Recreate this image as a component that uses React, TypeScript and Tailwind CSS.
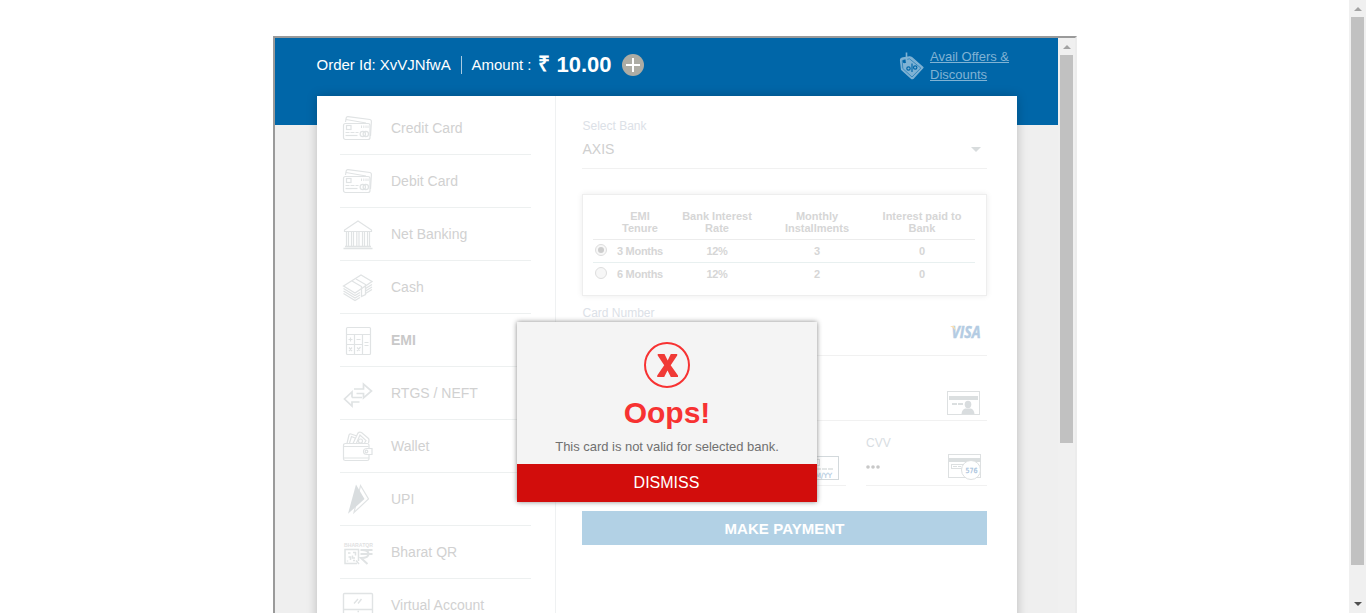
import React from "react";

const lineIcon = "shrink-0 fill-none stroke-[#e0e3e4]";

function CardsIcon() {
  return (
    <svg width="32" height="32" viewBox="0 0 32 32" className={lineIcon} strokeWidth="1.2">
      <path d="M3.5 10 L4.2 6 Q4.600 4.500 6 4.700 L28 7.500 Q29.600 7.900 29.400 9.500 L28.500 24" />
      <path d="M4 7.500 L24 11" />
      <rect x="1.500" y="11.500" width="26.500" height="16" rx="2" />
      <rect x="4.500" y="13.500" width="4.500" height="4" />
      <path d="M19.500 13.500 v2.500 M21.800 13.500 v2.500 M24 13.500 v2.500 M26 13.500 v2.500" strokeWidth="1" />
      <path d="M3.500 20.500 h13" strokeDasharray="4 1" />
      <path d="M3.500 23.500 h12" />
      <circle cx="20.800" cy="22" r="2.700" />
      <circle cx="23.800" cy="22" r="2.700" />
    </svg>
  );
}

function BankIcon() {
  return (
    <svg width="32" height="32" viewBox="0 0 32 32" className={lineIcon} strokeWidth="1.2">
      <path d="M16 3 L29.500 12 V13.500 H2.500 V12 Z" />
      <path d="M4.500 14 v14 M6.500 14 v14 M9.500 14 v14 M11.500 14 v14 M14.800 14 v14 M17 14 v14 M20.500 14 v14 M22.500 14 v14 M25.500 14 v14 M27.500 14 v14" />
      <path d="M3 28.500 h26 M1.500 30.500 h29" strokeWidth="1.300" />
    </svg>
  );
}

function CashIcon() {
  return (
    <svg width="32" height="32" viewBox="0 0 32 32" className={lineIcon} strokeWidth="1.300">
      <path d="M1.500 15 L19 4 L30 10.500 L13 22 Z" />
      <path d="M1.500 17.500 L13 24.500 L18 21.500 M1.500 20 L13 27 L18 24 M1.500 22.500 L13 29.500 L18 26.500" />
      <path d="M23.500 17.500 L30 13.500 M23.500 20 L30 16 M23.500 22.500 L30 18.500" />
      <path d="M10 10 L19.500 15.500 V25.500 L23.500 23.500 V13.500 L14 8" />
    </svg>
  );
}

function CalculatorIcon() {
  return (
    <svg width="32" height="32" viewBox="0 0 32 32" className={lineIcon} strokeWidth="1.200">
      <rect x="4.500" y="3.500" width="24" height="27" rx="1" />
      <path d="M4.500 10.500 H28.500 M12.500 10.500 V30 M20.500 10.500 V30 M4.500 20.500 H20.500" />
      <path d="M6.500 15.500 h4 M8.500 13.500 v4 M14.500 15.500 h4 M22.500 18.500 h4 M22.500 21.500 h4 M7 23.500 l3 3.500 M10 23.500 l-3 3.500 M15 27 l3.500 -4 M15 23.500 l3 3" />
    </svg>
  );
}

function TransferIcon() {
  return (
    <svg width="32" height="32" viewBox="0 0 32 32" className={lineIcon} strokeWidth="1.700">
      <path d="M12 12 H21.500 V7 L29.500 14 L21.500 21 V16.500 H14.500" />
      <path d="M20 20.500 H10 M10 20.500 V15 L2.500 22 L10 29 V25 H17.500" />
    </svg>
  );
}

function WalletIcon() {
  return (
    <svg width="32" height="32" viewBox="0 0 32 32" className={lineIcon} strokeWidth="1.200">
      <path d="M27 18.500 V15.500 Q27 13.500 25 13.500 H3.500 Q1.500 13.500 1.500 15.500 V29 Q1.500 30.500 3.500 30.500 H25 Q27 30.500 27 29 V24.500" />
      <path d="M30 18.500 H25 Q21.500 18.500 21.500 21.500 Q21.500 24.500 25 24.500 H30 Z M2 16.500 H26.500 M2 28 H27" />
      <circle cx="24.500" cy="21.500" r="1.300" />
      <path d="M5 13.500 L7 5 Q7.500 3.500 9 4 L15 6 M7.500 13 L9.500 6.500 L13 8 M11 13.500 L15 5 Q16.500 1 19.500 2.500 L26.500 8.500 Q27.500 9.500 26.500 13 M14.500 13 L18 5 L24 10.500 L22.500 13" />
      <circle cx="18.500" cy="11" r="2" />
    </svg>
  );
}

function UpiIcon() {
  return (
    <svg width="32" height="32" viewBox="0 0 32 32" className="shrink-0">
      <path d="M18.500 2.500 L26.500 16 L12 29.500 Z" fill="#fff" stroke="#e0e3e4" strokeWidth="1.200" />
      <path d="M14 1.500 L22.500 16 L6 30.800 Z" fill="#d9dddf" />
    </svg>
  );
}

function BharatQrIcon() {
  return (
    <svg width="32" height="32" viewBox="0 0 32 32" className={lineIcon} strokeWidth="1.500">
      <text x="2" y="10.500" textLength="29" lengthAdjust="spacingAndGlyphs" stroke="none" fill="#dfe1e2" className="font-['Liberation_Sans'] text-[5px] font-bold">BHARATQR</text>
      <path d="M15 27.500 H3 V13.500 H16.500 V25" />
      <path d="M6 17 h2.500 M11 16.500 h2.500 v3 M6.500 21 h2 v3 M10.500 19.500 v2.500 h2.500 M11 24.500 h2 M5.500 24.500 v1 M14 24.500 l3 3.500" />
      <path d="M18.500 14 H30.500 M18.500 18 H30.500 M20 14 Q26.500 14 26.500 18 Q26.500 22 19 22 L25.500 28" strokeWidth="2" />
    </svg>
  );
}

function MonitorIcon() {
  return (
    <svg width="32" height="32" viewBox="0 0 32 32" className={lineIcon} strokeWidth="1.400">
      <rect x="1.500" y="4.500" width="29" height="22" rx="1" />
      <path d="M2 20.500 h28 M12 14.500 l4 -4.500 M16 14.500 l3.500 -4.500 M15.500 22.500 h1.500" />
    </svg>
  );
}

const methods = [
  { label: "Credit Card", icon: CardsIcon },
  { label: "Debit Card", icon: CardsIcon },
  { label: "Net Banking", icon: BankIcon },
  { label: "Cash", icon: CashIcon },
  { label: "EMI", icon: CalculatorIcon, active: true },
  { label: "RTGS / NEFT", icon: TransferIcon },
  { label: "Wallet", icon: WalletIcon },
  { label: "UPI", icon: UpiIcon },
  { label: "Bharat QR", icon: BharatQrIcon },
  { label: "Virtual Account", icon: MonitorIcon },
];

const plans = [
  { tenure: "3 Months", rate: "12%", installments: "3", interest: "0", checked: true },
  { tenure: "6 Months", rate: "12%", installments: "2", interest: "0", checked: false },
];

const planGrid = "grid grid-cols-[16px_62px_92px_108px_102px] text-center text-[11px] leading-[12px] font-bold text-[#d6d6d6]";

function Header() {
  return (
    <header className="flex h-[87px] bg-[#0066a8] pl-[41.500px] text-white">
      <div className="flex h-[54px] items-center text-[15px]">
        <span className="w-[144.500px] whitespace-nowrap">Order Id: XvVJNfwA</span>
        <span className="mr-[9.500px] h-[18px] w-px bg-[#a9cbe2]" />
        <span className="w-[66px] whitespace-nowrap">Amount :</span>
        <span className="w-[19px] -translate-y-px text-[21px] font-bold">₹</span>
        <span className="w-[65.500px] -translate-y-px text-[22px] font-bold">10.00</span>
        <svg width="22" height="22" viewBox="0 0 22 22">
          <circle cx="11" cy="11" r="11" fill="#adaca4" />
          <path d="M4 11 H18 M11 4 V18" stroke="#fff" strokeWidth="2" />
        </svg>
      </div>
      <div className="mt-[10px] ml-[255px] flex">
        <svg width="26" height="32" viewBox="0 0 26 32" className="mt-[2px] mr-[5px]">
          <path d="M1.500 10 Q1.500 8.500 3 8 L10 6.800 Q11.500 6.500 12.700 7.500 L24 17.500 L14 28.500 Q13 29 12 28 L2.500 19.500 Z" fill="#7fb2d4" stroke="#7fb2d4" strokeWidth="1.200" strokeLinejoin="round" />
          <path d="M3.200 10.500 L10.500 8.800 L21.800 18 L13 27 L3.800 18.500 Z" fill="none" stroke="#1a76b1" strokeWidth=".7" />
          <circle cx="5.500" cy="11.500" r="1.800" fill="#0066a8" />
          <path d="M7.500 2.500 V12" stroke="#7fb2d4" strokeWidth="1.600" />
          <g fill="none" stroke="#0066a8" strokeWidth="1.200">
            <circle cx="9.500" cy="18.500" r="1.700" />
            <circle cx="16.200" cy="17.500" r="1.700" />
            <path d="M13 13.500 V22" />
          </g>
        </svg>
        <a className="w-[90px] text-[13px] leading-[18px] text-[#80b3d4] underline">
          Avail Offers &amp; Discounts
        </a>
      </div>
    </header>
  );
}

function Sidebar() {
  return (
    <nav className="w-[239px] shrink-0 border-r border-[#eff1f2] pt-[6px] pl-[23px]">
      {methods.map(({ label, icon: Icon, active }) => (
        <div key={label} className="flex h-[53px] w-[191px] items-center border-b border-[#edf0f0] pl-[2px]">
          <Icon />
          <span className={active ? "ml-[17px] text-[14px] font-bold text-[#c9c9c9]" : "ml-[17px] text-[14px] text-[#d1d1d1]"}>
            {label}
          </span>
        </div>
      ))}
    </nav>
  );
}

function Radio({ checked }: { checked: boolean }) {
  return (
    <span className="ml-[2px] flex size-[12px] -translate-y-px items-center justify-center rounded-full border border-[#dedede] bg-[#f7f7f7]">
      {checked && <span className="size-[6px] rounded-full bg-[#cdcdcd]" />}
    </span>
  );
}

function PlanTable() {
  return (
    <div className="mt-[25px] h-[102px] w-[405px] border border-[#eeeeee] px-[10px] pt-[15px] shadow-[0_0_6px_#ececec]">
      <div className={`${planGrid} h-[30px] w-[382px] border-b border-[#ececec]`}>
        <span />
        <span>EMI<br />Tenure</span>
        <span>Bank Interest<br />Rate</span>
        <span>Monthly<br />Installments</span>
        <span>Interest paid to<br />Bank</span>
      </div>
      {plans.map((p) => (
        <div key={p.tenure} className={`${planGrid} h-[23px] w-[382px] items-center border-b border-[#e8f0f0] tracking-[-0.3px] last:border-transparent`}>
          <Radio checked={p.checked} />
          <span>{p.tenure}</span>
          <span>{p.rate}</span>
          <span>{p.installments}</span>
          <span>{p.interest}</span>
        </div>
      ))}
    </div>
  );
}

function NameCardIcon() {
  return (
    <svg width="33" height="24" viewBox="0 0 33 24">
      <rect x=".5" y=".5" width="32" height="23" fill="none" stroke="#dde0e1" />
      <rect x="2" y="5" width="29" height="4" fill="#dbdfe0" />
      <path d="M5 13 h5 M11 13 h5" stroke="#dbdfe0" strokeWidth="2" />
      <ellipse cx="21" cy="13.500" rx="3.300" ry="3.700" fill="#d9dddf" />
      <path d="M14.500 23 q.5 -5 4 -5.500 h5 q3.500 .5 4 5.500 z" fill="#d9dddf" />
    </svg>
  );
}

function ExpiryIcon() {
  return (
    <svg width="33" height="24" viewBox="0 0 33 24">
      <rect x=".5" y=".5" width="32" height="23" fill="none" stroke="#d3d9dc" />
      <rect x="7.500" y="3.500" width="6" height="6" fill="none" stroke="#dbdfe0" />
      <path d="M4 13 h24" stroke="#dbdfe0" strokeWidth="1.500" strokeDasharray="5 1" />
      <text x="3" y="21.500" className="font-['DejaVu_Sans'] text-[7px]" textLength="23" stroke="#b5cce2" strokeWidth=".2" lengthAdjust="spacingAndGlyphs" fill="#b5cce2">MM/YY</text>
    </svg>
  );
}

function CvvIcon() {
  return (
    <svg width="34" height="27" viewBox="0 0 34 27">
      <rect x=".5" y=".5" width="32" height="23" fill="none" stroke="#dde0e1" />
      <rect x="1" y="4" width="32" height="4" fill="#dbdfe0" />
      <rect x="3.500" y="10.500" width="13" height="4" fill="none" stroke="#dde0e1" />
      <path d="M5 12.500 h8" stroke="#dbdfe0" strokeDasharray="4 1" />
      <circle cx="23" cy="16" r="9.500" fill="#fff" stroke="#dde0e1" />
      <text x="17.500" y="18.500" className="font-['DejaVu_Sans'] text-[7px]" textLength="12" lengthAdjust="spacingAndGlyphs" fill="#a6c1dc" stroke="#a6c1dc" strokeWidth=".25">576</text>
    </svg>
  );
}

function VisaLogo() {
  return (
    <svg width="36" height="16" viewBox="0 0 36 16">
      <text x="1.500" y="13" textLength="29" lengthAdjust="spacingAndGlyphs" fill="#b4cce3" stroke="#b4cce3" strokeWidth=".5" className="font-['Open_Sans'] text-[16px] font-bold italic">VISA</text>
      <path d="M0 1 H4 L6 6 Q3.500 2.500 0 1 Z" fill="#fbdfb0" />
    </svg>
  );
}

function Payment() {
  return (
    <section className="w-[460px] pl-[26px]">
      <div className="flex h-[73px] w-[405px] flex-col border-b border-[#f1f1f1] pt-[22px]">
        <label className="pl-[0.500px] text-[12px] leading-[16px] text-[#dce1e7]">Select Bank</label>
        <div className="mt-[6px] flex h-[18px] items-center justify-between pr-[6px] pl-[0.500px] text-[14px] text-[#cfcfcf]">
          AXIS
          <svg width="10" height="5" viewBox="0 0 10 5"><path d="M0 0 H10 L5 5 Z" fill="#d8dcdd" /></svg>
        </div>
      </div>
      <PlanTable />
      <div className="flex h-[60px] w-[405px] items-start justify-between border-b border-[#f1f1f1] pt-[9px] pr-px">
        <label className="pl-[0.500px] text-[12px] leading-[16px] text-[#dce1e7]">Card Number</label>
        <span className="mt-[20px]"><VisaLogo /></span>
      </div>
      <div className="flex h-[65px] w-[405px] justify-end border-b border-[#f1f1f1] pt-[35px] pr-[7px]">
        <NameCardIcon />
      </div>
      <div className="flex h-[65px] w-[405px] gap-[20px]">
        <div className="flex w-[264px] justify-end border-b border-[#f1f1f1] pt-[35px] pr-[7px]">
          <ExpiryIcon />
        </div>
        <div className="flex w-[121px] justify-between border-b border-[#f1f1f1] pr-[5px]">
          <div className="pt-[14px] text-[#d8dde2]">
            <div className="text-[12px] leading-[16px]">CVV</div>
            <svg width="14" height="4" viewBox="0 0 14 4" className="mt-[14px]" fill="#c8c8c8">
              <circle cx="2" cy="2" r="1.800" /><circle cx="7" cy="2" r="1.800" /><circle cx="12" cy="2" r="1.800" />
            </svg>
          </div>
          <span className="mt-[33px]"><CvvIcon /></span>
        </div>
      </div>
      <button className="mt-[25px] block h-[34px] w-[405px] bg-[#b2d1e5] pt-[2px] text-[15px] font-bold tracking-[0.080px] text-white">
        MAKE PAYMENT
      </button>
    </section>
  );
}

function Dialog() {
  return (
    <div role="dialog" className="absolute top-[322px] left-[517px] flex h-[180px] w-[300px] flex-col items-center bg-[#f4f4f4] pt-[20px] shadow-[0_0_5px_#888]">
      <svg width="46" height="46" viewBox="0 0 46 46">
        <circle cx="23" cy="23" r="22" fill="none" stroke="#f73232" strokeWidth="2" />
        <path d="M13.700 12 H20.500 L23.700 18.500 L26.800 12 H33.200 V13.500 L26.700 23.200 L34 33.500 V35 H26.800 L23.500 28.500 L20.200 35 H13.200 V33.500 L20.200 23.200 L13.700 13.500 Z" fill="#f03a36" />
      </svg>
      <h2 className="mt-[7px] text-[30px] leading-[36px] font-bold text-[#f73232]">Oops!</h2>
      <p className="mt-[8px] text-[13px] leading-[16px] tracking-[-0.030px] whitespace-nowrap text-[#707070]">This card is not valid for selected bank.</p>
      <button className="mt-auto h-[38px] w-full bg-[#d20d0c] pr-px text-[16px] text-white">DISMISS</button>
    </div>
  );
}

function FrameScrollbar() {
  return (
    <div className="flex w-[17px] shrink-0 flex-col items-center bg-[#f0f0f0]">
      <div className="flex h-[17px] items-center">
        <svg width="8" height="4" viewBox="0 0 8 4"><path d="M0 4 L4 0 L8 4 Z" fill="#a3a3a3" /></svg>
      </div>
      <div className="h-[388px] w-[13px] bg-[#c1c1c1]" />
    </div>
  );
}

function PageScrollbar() {
  return (
    <div className="flex h-[613px] w-[17px] shrink-0 flex-col items-center bg-[#f0f0f0]">
      <div className="flex h-[17px] items-center">
        <svg width="8" height="4" viewBox="0 0 8 4"><path d="M0 4 L4 0 L8 4 Z" fill="#a3a3a3" /></svg>
      </div>
      <div className="h-[548px] w-[13px] bg-[#c1c1c1]" />
      <svg width="8" height="4" viewBox="0 0 8 4" className="mt-[37px]"><path d="M0 0 L4 4 L8 0 Z" fill="#505050" /></svg>
    </div>
  );
}

export default function App() {
  return (
    <div className="relative flex h-[613px] w-[1366px] overflow-hidden bg-white font-['Liberation_Sans',Arial,sans-serif]">
      <main className="flex h-[613px] w-[1349px] pt-[36px] pl-[273px]">
        <div className="flex h-[577px] w-[804px] overflow-hidden border-t-2 border-r-2 border-l-2 border-t-[#9a9a9a] border-r-[#ececec] border-l-[#9a9a9a]">
          <div className="h-[575px] w-[783px] shrink-0 overflow-hidden bg-[#efefef]">
            <Header />
            <div className="relative -mt-[29px] ml-[42px] flex h-[560px] w-[700px] bg-white shadow-[0_0_10px_rgba(0,0,0,0.22)]">
              <Sidebar />
              <Payment />
            </div>
          </div>
          <FrameScrollbar />
        </div>
      </main>
      <PageScrollbar />
      <Dialog />
    </div>
  );
}
